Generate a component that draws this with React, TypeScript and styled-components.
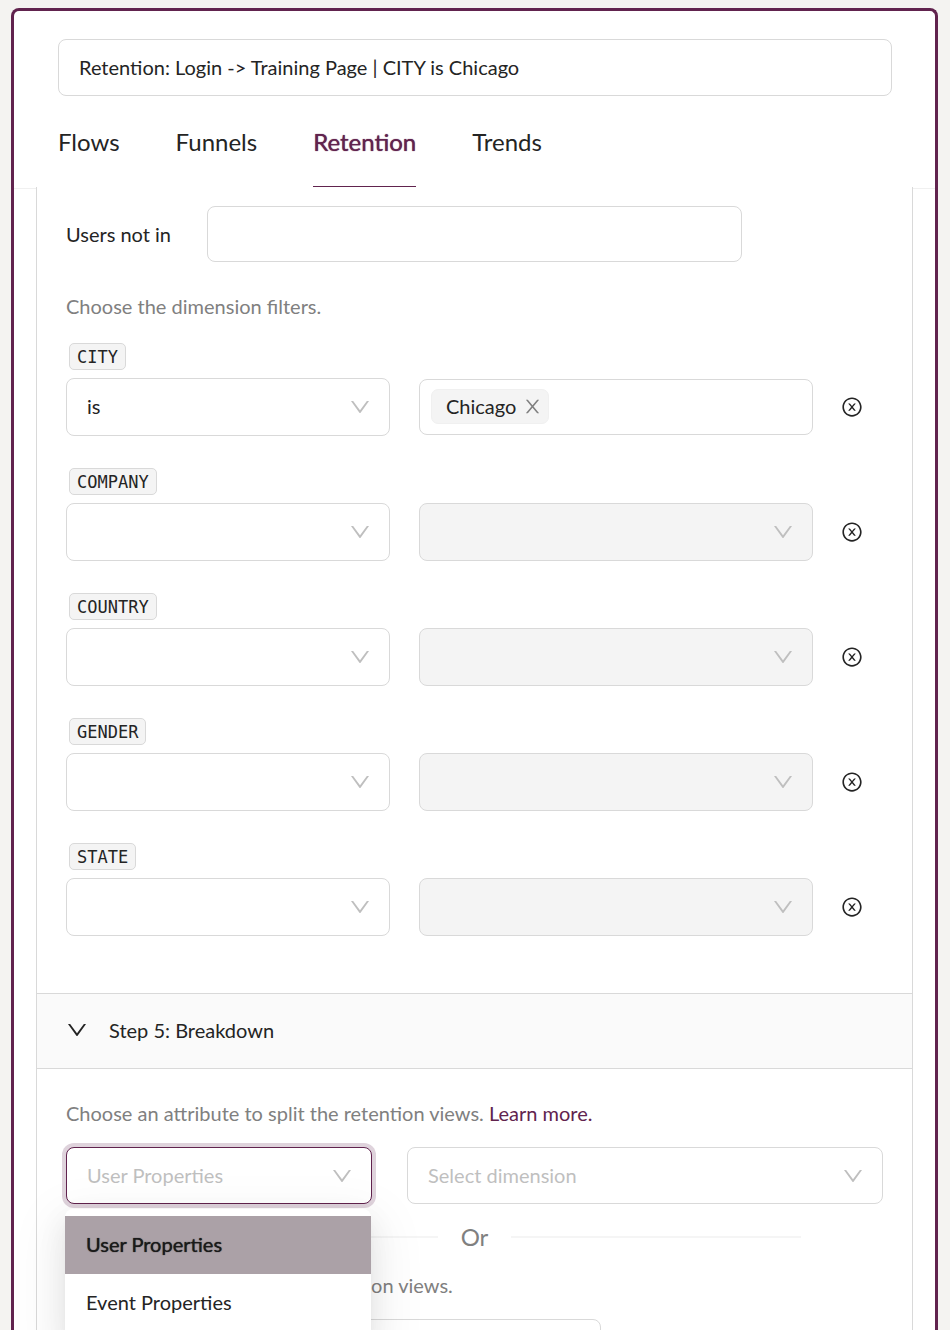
import React from "react";
import styled, { createGlobalStyle, css } from "styled-components";
import { AiOutlineDown } from "react-icons/ai";

const color = {
  brand: "#61234e",
  text: "#242424",
  muted: "#808080",
  placeholder: "#bfbfbf",
  border: "#d9d9d9",
  fill: "#f4f4f4",
};

const GlobalStyle = createGlobalStyle`
  *, *::before, *::after { box-sizing: border-box; }
  body {
    margin: 0;
    background: #f4f3f1;
    color: ${color.text};
    font-family: Lato, "Liberation Sans", sans-serif;
    font-size: 20px;
    line-height: 32px;
  }
  button, input, select { font: inherit; color: inherit; margin: 0; }
`;

const Page = styled.div`
  height: 100vh;
  padding: 8px 12px 0 11px;
  overflow: hidden;
`;

const Panel = styled.main`
  display: flex;
  flex-direction: column;
  height: 100%;
  background: #fff;
  border: 3px solid ${color.brand};
  border-bottom: 0;
  border-radius: 8px 8px 0 0;
`;

const Header = styled.header`
  padding: 28px 43px 0 44px;
  border-bottom: 1px solid #f0f0f0;
`;

const fieldBox = css`
  display: block;
  width: 100%;
  height: 57px;
  padding: 0 20px 2px;
  background: #fff;
  border: 1px solid ${color.border};
  border-radius: 8px;
  outline: none;
`;

const TextField = styled.input`
  ${fieldBox}
`;

const Tabs = styled.nav`
  display: flex;
  gap: 56px;
  margin-top: 29px;
`;

const Tab = styled.button<{ $active?: boolean }>`
  padding: 0 0 27px;
  background: none;
  border: 0;
  border-bottom: 1px solid ${(p) => (p.$active ? color.brand : "transparent")};
  color: ${(p) => (p.$active ? color.brand : color.text)};
  font-size: 24px;
  line-height: 34px;
  margin-bottom: 1px;
  text-shadow: ${(p) => (p.$active ? "0 0 1px currentColor" : "none")};
  cursor: pointer;
`;

const ScrollArea = styled.div`
  flex: 1;
  min-height: 0;
  margin-top: -2px;
  padding: 0 22px;
  overflow: hidden auto;
  scrollbar-width: none;
  position: relative;
`;

const Steps = styled.div`
  min-height: 100%;
  background: #fff;
  border: solid ${color.border};
  border-width: 0 1px;
`;

const StepBody = styled.section`
  padding: 19px 29px 57px;
`;

const SegmentRow = styled.div`
  display: grid;
  grid-template-columns: 141px minmax(0, 535px);
  align-items: center;
`;

const SegmentField = styled(TextField)`
  height: 56px;
`;

const Hint = styled.p`
  margin: 0;
  color: ${color.muted};
`;

const FilterHint = styled(Hint)`
  margin-top: 28px;
`;

const FilterList = styled.div`
  display: grid;
  gap: 32px;
  margin-top: 21px;
`;

const Filter = styled.div`
  display: grid;
  gap: 8px;
  justify-items: start;
`;

const FilterName = styled.code`
  height: 27px;
  margin-left: 3px;
  padding: 0 7px;
  background: ${color.fill};
  border: 1px solid ${color.border};
  border-radius: 5px;
  font-family: "DejaVu Sans Mono", monospace;
  font-size: 17px;
  line-height: 26px;
`;

const FilterControls = styled.div`
  display: grid;
  grid-template-columns: minmax(0, 353fr) minmax(0, 394fr) 70px;
  align-items: center;
  width: 100%;
  > :first-child { margin-right: 29px; }
  select { height: 58px; }
`;

const SelectWrap = styled.div`
  position: relative;
  min-width: 0;
`;

const SelectBox = styled.select<{ $placeholder?: boolean; $open?: boolean }>`
  ${fieldBox}
  appearance: none;
  opacity: 1;
  color: ${(p) => (p.$placeholder ? color.placeholder : color.text)};
  &:disabled { background: ${color.fill}; }
  ${(p) =>
    p.$open &&
    css`
      border-color: ${color.brand};
      box-shadow: 0 0 0 4px rgba(97, 35, 78, 0.2);
    `}
`;

const SelectArrow = styled(AiOutlineDown)`
  position: absolute;
  top: 17px;
  right: 18px;
  color: ${color.placeholder};
  pointer-events: none;
`;

const ValueBox = styled.div`
  ${fieldBox}
  display: flex;
  align-items: center;
  height: 56px;
  padding: 0 11px 1px;
`;

const Chip = styled.span`
  display: flex;
  align-items: center;
  gap: 6px;
  height: 35px;
  padding: 0 5px 2px 14px;
  background: ${color.fill};
  border: 1px solid #f0f0f0;
  border-radius: 7px;
`;

const ValueInput = styled.input`
  flex: 1;
  min-width: 0;
  border: 0;
  outline: none;
  background: none;
`;

const IconButton = styled.button`
  display: flex;
  padding: 0;
  background: none;
  border: 0;
  cursor: pointer;
`;

const ChipRemove = styled(IconButton)`
  padding-top: 2px;
  color: ${color.muted};
`;

const FilterClear = styled(IconButton)`
  margin-left: 28px;
`;

const StepHeader = styled.button`
  display: flex;
  align-items: center;
  gap: 20px;
  width: 100%;
  height: 76px;
  padding: 0 28px 2px;
  background: #fafafa;
  border: solid ${color.border};
  border-width: 1px 0;
  text-align: left;
  cursor: pointer;
`;

const BreakdownBody = styled.section`
  padding: 28px 29px 0;
`;

const LearnMore = styled.a`
  color: ${color.brand};
  text-decoration: none;
`;

const BreakdownRow = styled.div`
  display: grid;
  grid-template-columns: minmax(0, 306fr) minmax(0, 476fr);
  gap: 35px;
  margin-top: 18px;
`;

const Menu = styled.ul`
  position: absolute;
  z-index: 2;
  top: 62px;
  left: -1px;
  width: 100%;
  margin: 0;
  padding: 7px 0;
  list-style: none;
  background: #fff;
  border-radius: 8px;
  box-shadow:
    0 11px 29px rgba(0, 0, 0, 0.08),
    0 5px 11px -7px rgba(0, 0, 0, 0.12),
    0 16px 50px 14px rgba(0, 0, 0, 0.05);
`;

const MenuItem = styled.li<{ $selected?: boolean }>`
  height: 58px;
  padding: 0 21px;
  line-height: 56px;
  color: ${(p) => (p.$selected ? "#1a1a1a" : color.text)};
  background: ${(p) => (p.$selected ? "#aba1a7" : "#fff")};
  text-shadow: ${(p) => (p.$selected ? "0 0 1px currentColor" : "none")};
  cursor: pointer;
`;

const Divider = styled.div`
  display: flex;
  align-items: center;
  gap: 23px;
  width: 80%;
  margin: 17px auto 16px;
  color: ${color.muted};
  font-size: 24px;
  &::before, &::after {
    content: "";
    flex: 1;
    height: 2px;
    background: #f5f5f5;
  }
`;

const MetricField = styled(TextField)`
  width: 535px;
  max-width: 100%;
  margin-top: 18px;
`;

function CloseIcon() {
  return (
    <svg width="21" height="21" viewBox="0 0 1024 1024" fill="currentColor" aria-hidden="true">
      <path d="M563.8 512l262.5-312.9c4.4-5.2.7-13.1-6.1-13.1h-79.8c-4.7 0-9.2 2.1-12.3 5.7L511.6 449.8 295.1 191.7c-3-3.6-7.5-5.7-12.3-5.7H203c-6.8 0-10.5 7.9-6.1 13.1L459.4 512 196.9 824.9A7.95 7.95 0 0 0 203 838h79.8c4.7 0 9.2-2.1 12.3-5.7l216.5-258.1 216.5 258.1c3 3.6 7.5 5.7 12.3 5.7h79.8c6.8 0 10.5-7.9 6.1-13.1L563.8 512z" />
    </svg>
  );
}

function CloseCircleIcon() {
  return (
    <svg width="22" height="22" viewBox="0 0 1024 1024" fill="currentColor" aria-hidden="true">
      <path d="M685.4 354.8c0-4.4-3.6-8-8-8l-66 .3L512 465.6l-99.3-118.4-66.1-.3c-4.4 0-8 3.5-8 8 0 1.9.7 3.7 1.9 5.2l130.1 155L340.5 670a8.32 8.32 0 0 0-1.9 5.2c0 4.4 3.6 8 8 8l66.1-.3L512 564.4l99.3 118.4 66 .3c4.4 0 8-3.5 8-8 0-1.9-.7-3.7-1.9-5.2L553.5 515l130.1-155c1.2-1.4 1.8-3.3 1.8-5.2z" />
      <path d="M512 65C264.6 65 64 265.6 64 513s200.6 448 448 448 448-200.6 448-448S759.4 65 512 65zm0 820c-205.4 0-372-166.6-372-372s166.6-372 372-372 372 166.6 372 372-166.6 372-372 372z" />
    </svg>
  );
}

type SelectProps = {
  label: string;
  options?: string[];
  disabled?: boolean;
  placeholder?: boolean;
  open?: boolean;
  children?: React.ReactNode;
};

function Select({ label, options = [""], disabled, placeholder, open, children }: SelectProps) {
  return (
    <SelectWrap>
      <SelectBox aria-label={label} disabled={disabled} $placeholder={placeholder} $open={open}>
        {options.map((o) => (
          <option key={o}>{o}</option>
        ))}
      </SelectBox>
      <SelectArrow size={24} />
      {children}
    </SelectWrap>
  );
}

const tabs = ["Flows", "Funnels", "Retention", "Trends"];

const filters = [
  { name: "CITY", operator: "is", value: "Chicago" },
  { name: "COMPANY" },
  { name: "COUNTRY" },
  { name: "GENDER" },
  { name: "STATE" },
];

export default function App() {
  return (
    <Page>
      <GlobalStyle />
      <Panel>
        <Header>
          <TextField
            aria-label="Report name"
            defaultValue="Retention: Login -> Training Page | CITY is Chicago"
          />
          <Tabs>
            {tabs.map((t) => (
              <Tab key={t} type="button" $active={t === "Retention"}>
                {t}
              </Tab>
            ))}
          </Tabs>
        </Header>
        <ScrollArea>
          <Steps>
            <StepBody>
              <SegmentRow>
                <label htmlFor="not-in">Users not in</label>
                <SegmentField id="not-in" />
              </SegmentRow>
              <FilterHint>Choose the dimension filters.</FilterHint>
              <FilterList>
                {filters.map((f) => (
                  <Filter key={f.name}>
                    <FilterName>{f.name}</FilterName>
                    <FilterControls>
                      <Select label={`${f.name} operator`} options={[f.operator ?? ""]} />
                      {f.value ? (
                        <ValueBox>
                          <Chip>
                            {f.value}
                            <ChipRemove type="button" aria-label={`Remove ${f.value}`}>
                              <CloseIcon />
                            </ChipRemove>
                          </Chip>
                          <ValueInput aria-label={`${f.name} values`} />
                        </ValueBox>
                      ) : (
                        <Select label={`${f.name} values`} disabled />
                      )}
                      <FilterClear type="button" aria-label={`Clear ${f.name}`}>
                        <CloseCircleIcon />
                      </FilterClear>
                    </FilterControls>
                  </Filter>
                ))}
              </FilterList>
            </StepBody>
            <StepHeader type="button" aria-expanded="true">
              <AiOutlineDown size={24} />
              Step 5: Breakdown
            </StepHeader>
            <BreakdownBody>
              <Hint>
                Choose an attribute to split the retention views.{" "}
                <LearnMore href="#learn-more">Learn more.</LearnMore>
              </Hint>
              <BreakdownRow>
                <Select label="Property type" options={["User Properties"]} placeholder open>
                  <Menu role="listbox" aria-label="Property type">
                    <MenuItem role="option" aria-selected="true" $selected>
                      User Properties
                    </MenuItem>
                    <MenuItem role="option" aria-selected="false">
                      Event Properties
                    </MenuItem>
                  </Menu>
                </Select>
                <Select label="Dimension" options={["Select dimension"]} placeholder />
              </BreakdownRow>
              <Divider>Or</Divider>
              <Hint>Choose a metric to split the retention views.</Hint>
              <MetricField aria-label="Metric" />
            </BreakdownBody>
          </Steps>
        </ScrollArea>
      </Panel>
    </Page>
  );
}
